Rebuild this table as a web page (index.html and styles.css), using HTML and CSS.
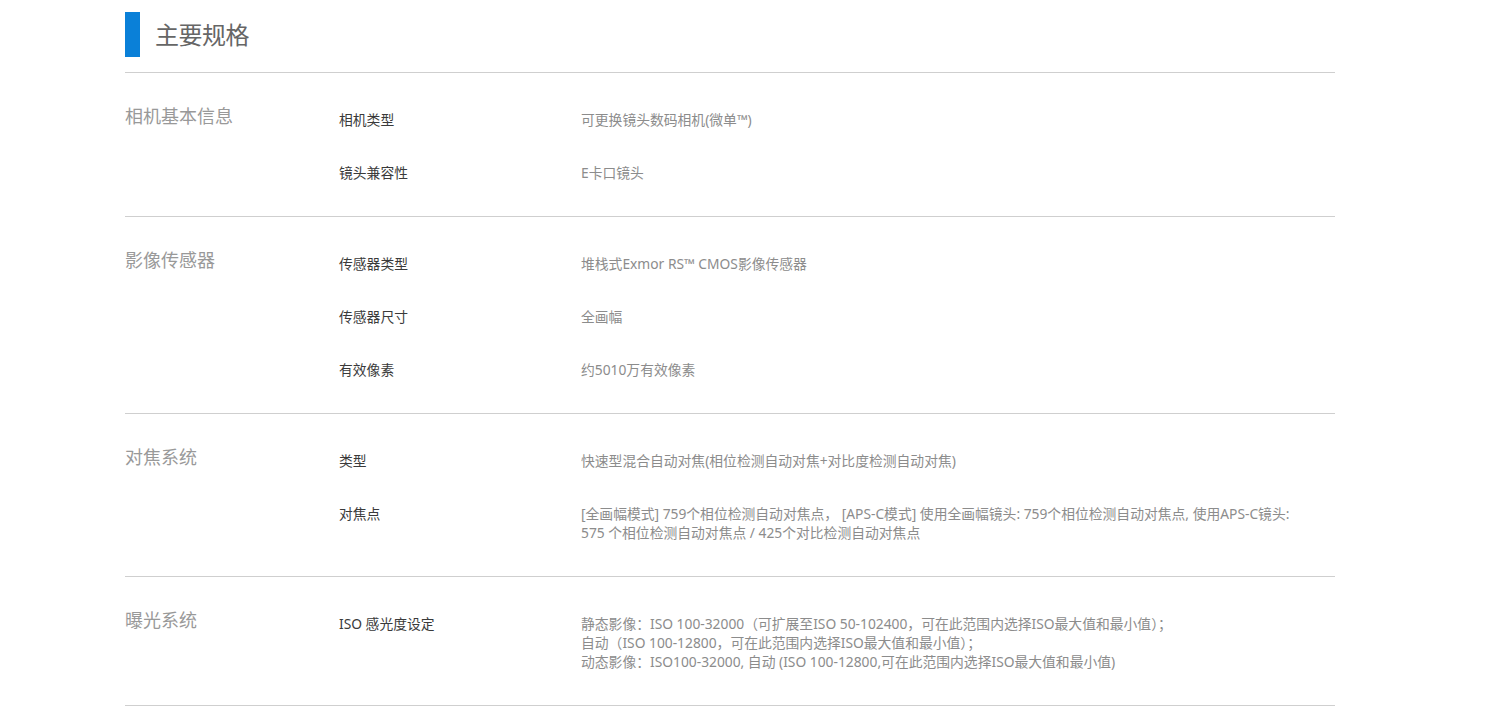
FILE: index.html
```html
<!DOCTYPE html>
<html lang="zh-CN">
<head>
<meta charset="utf-8">
<title>主要规格</title>
<link rel="stylesheet" href="styles.css">
</head>
<body>
<div class="spec">
  <div class="spec-head">
    <span class="spec-bar"></span>
    <h2 class="spec-title">主要规格</h2>
  </div>

  <div class="group">
    <div class="group-title">相机基本信息</div>
    <div class="rows">
      <div class="row"><div class="label">相机类型</div><div class="value">可更换镜头数码相机(微单™)</div></div>
      <div class="row"><div class="label">镜头兼容性</div><div class="value">E卡口镜头</div></div>
    </div>
  </div>

  <div class="group">
    <div class="group-title">影像传感器</div>
    <div class="rows">
      <div class="row"><div class="label">传感器类型</div><div class="value">堆栈式Exmor RS™ CMOS影像传感器</div></div>
      <div class="row"><div class="label">传感器尺寸</div><div class="value">全画幅</div></div>
      <div class="row"><div class="label">有效像素</div><div class="value">约5010万有效像素</div></div>
    </div>
  </div>

  <div class="group">
    <div class="group-title">对焦系统</div>
    <div class="rows">
      <div class="row"><div class="label">类型</div><div class="value">快速型混合自动对焦(相位检测自动对焦+对比度检测自动对焦)</div></div>
      <div class="row"><div class="label">对焦点</div><div class="value">[全画幅模式] 759个相位检测自动对焦点， [APS-C模式] 使用全画幅镜头: 759个相位检测自动对焦点, 使用APS-C镜头: 575 个相位检测自动对焦点 / 425个对比检测自动对焦点</div></div>
    </div>
  </div>

  <div class="group">
    <div class="group-title">曝光系统</div>
    <div class="rows">
      <div class="row"><div class="label">ISO 感光度设定</div><div class="value">静态影像：ISO 100-32000（可扩展至ISO 50-102400，可在此范围内选择ISO最大值和最小值）；<br>自动（ISO 100-12800，可在此范围内选择ISO最大值和最小值）；<br>动态影像：ISO100-32000, 自动 (ISO 100-12800,可在此范围内选择ISO最大值和最小值)</div></div>
    </div>
  </div>
</div>
</body>
</html>
```

FILE: styles.css
```css
html, body {
  margin: 0;
  padding: 0;
  background: #fff;
}

body {
  font-family: "Noto Sans", "Noto Sans CJK SC", sans-serif;
}

.spec {
  width: 1210px;
  margin-left: 125px;
}

.spec-head {
  display: flex;
  align-items: center;
  gap: 15px;
  padding: 12px 0 15px;
  border-bottom: 1px solid #cfcfcf;
}

.spec-bar {
  width: 15px;
  height: 45px;
  background: #0a80d8;
  flex: none;
}

.spec-title {
  margin: 0;
  font-size: 24px;
  font-weight: normal;
  color: #666;
  line-height: 32px;
  letter-spacing: -0.5px;
}

.group {
  display: flex;
  border-bottom: 1px solid #cfcfcf;
}

.group-title {
  width: 214px;
  flex: none;
  padding-top: 31px;
  font-size: 18px;
  line-height: 24px;
  color: #999;
}

.rows {
  flex: 1;
  display: flex;
  flex-direction: column;
  gap: 34px;
  padding: 37px 0 34px;
}

.row {
  display: flex;
  font-size: 13.8px;
  line-height: 19px;
}

.label {
  width: 242px;
  flex: none;
  color: #3a3a3a;
}

.value {
  flex: 1;
  padding-right: 30px;
  color: #8c8c8c;
}
```
